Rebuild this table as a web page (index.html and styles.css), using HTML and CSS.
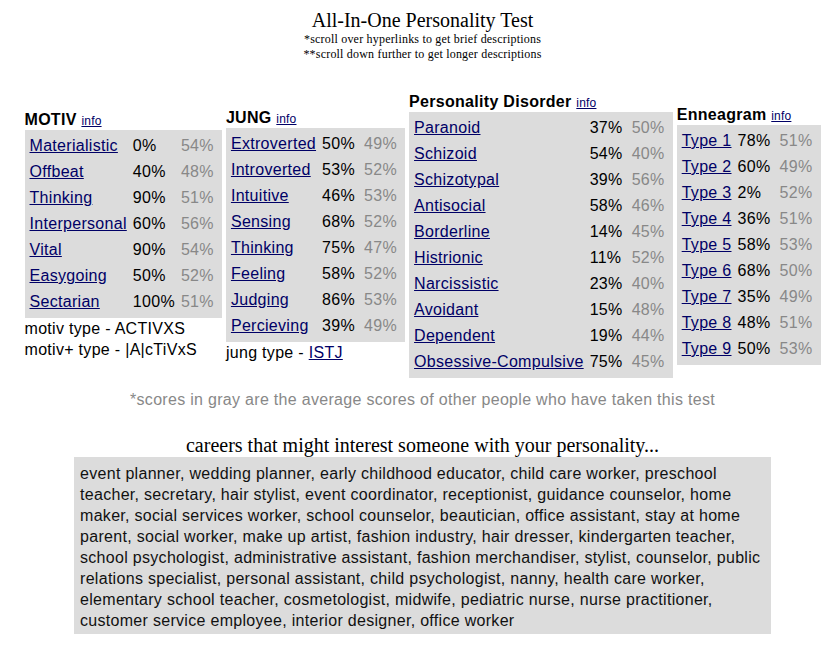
FILE: index.html
```html
<!DOCTYPE html>
<html>
<head>
<meta charset="utf-8">
<title>All-In-One Personality Test</title>
<link rel="stylesheet" href="styles.css">
</head>
<body>
<div class="page">
  <header class="intro">
    <h1 class="title">All-In-One Personality Test</h1>
    <p class="note">*scroll over hyperlinks to get brief descriptions</p>
    <p class="note">**scroll down further to get longer descriptions</p>
  </header>

  <section class="results">
    <div class="block">
      <h2 class="block-head">MOTIV <a href="#" class="info">info</a></h2>
      <table class="scores">
        <tr><td><a href="#">Materialistic</a></td><td class="pct">0%</td><td class="avg">54%</td></tr>
        <tr><td><a href="#">Offbeat</a></td><td class="pct">40%</td><td class="avg">48%</td></tr>
        <tr><td><a href="#">Thinking</a></td><td class="pct">90%</td><td class="avg">51%</td></tr>
        <tr><td><a href="#">Interpersonal</a></td><td class="pct">60%</td><td class="avg">56%</td></tr>
        <tr><td><a href="#">Vital</a></td><td class="pct">90%</td><td class="avg">54%</td></tr>
        <tr><td><a href="#">Easygoing</a></td><td class="pct">50%</td><td class="avg">52%</td></tr>
        <tr><td><a href="#">Sectarian</a></td><td class="pct">100%</td><td class="avg">51%</td></tr>
      </table>
      <p class="type-line">motiv type - ACTIVXS</p>
      <p class="type-line">motiv+ type - |A|cTiVxS</p>
    </div>

    <div class="block">
      <h2 class="block-head">JUNG <a href="#" class="info">info</a></h2>
      <table class="scores">
        <tr><td><a href="#">Extroverted</a></td><td class="pct">50%</td><td class="avg">49%</td></tr>
        <tr><td><a href="#">Introverted</a></td><td class="pct">53%</td><td class="avg">52%</td></tr>
        <tr><td><a href="#">Intuitive</a></td><td class="pct">46%</td><td class="avg">53%</td></tr>
        <tr><td><a href="#">Sensing</a></td><td class="pct">68%</td><td class="avg">52%</td></tr>
        <tr><td><a href="#">Thinking</a></td><td class="pct">75%</td><td class="avg">47%</td></tr>
        <tr><td><a href="#">Feeling</a></td><td class="pct">58%</td><td class="avg">52%</td></tr>
        <tr><td><a href="#">Judging</a></td><td class="pct">86%</td><td class="avg">53%</td></tr>
        <tr><td><a href="#">Percieving</a></td><td class="pct">39%</td><td class="avg">49%</td></tr>
      </table>
      <p class="type-line">jung type - <a href="#">ISTJ</a></p>
    </div>

    <div class="block">
      <h2 class="block-head">Personality Disorder <a href="#" class="info">info</a></h2>
      <table class="scores">
        <tr><td><a href="#">Paranoid</a></td><td class="pct">37%</td><td class="avg">50%</td></tr>
        <tr><td><a href="#">Schizoid</a></td><td class="pct">54%</td><td class="avg">40%</td></tr>
        <tr><td><a href="#">Schizotypal</a></td><td class="pct">39%</td><td class="avg">56%</td></tr>
        <tr><td><a href="#">Antisocial</a></td><td class="pct">58%</td><td class="avg">46%</td></tr>
        <tr><td><a href="#">Borderline</a></td><td class="pct">14%</td><td class="avg">45%</td></tr>
        <tr><td><a href="#">Histrionic</a></td><td class="pct">11%</td><td class="avg">52%</td></tr>
        <tr><td><a href="#">Narcissistic</a></td><td class="pct">23%</td><td class="avg">40%</td></tr>
        <tr><td><a href="#">Avoidant</a></td><td class="pct">15%</td><td class="avg">48%</td></tr>
        <tr><td><a href="#">Dependent</a></td><td class="pct">19%</td><td class="avg">44%</td></tr>
        <tr><td><a href="#">Obsessive-Compulsive</a></td><td class="pct">75%</td><td class="avg">45%</td></tr>
      </table>
    </div>

    <div class="block">
      <h2 class="block-head">Enneagram <a href="#" class="info">info</a></h2>
      <table class="scores">
        <tr><td><a href="#">Type 1</a></td><td class="pct">78%</td><td class="avg">51%</td></tr>
        <tr><td><a href="#">Type 2</a></td><td class="pct">60%</td><td class="avg">49%</td></tr>
        <tr><td><a href="#">Type 3</a></td><td class="pct">2%</td><td class="avg">52%</td></tr>
        <tr><td><a href="#">Type 4</a></td><td class="pct">36%</td><td class="avg">51%</td></tr>
        <tr><td><a href="#">Type 5</a></td><td class="pct">58%</td><td class="avg">53%</td></tr>
        <tr><td><a href="#">Type 6</a></td><td class="pct">68%</td><td class="avg">50%</td></tr>
        <tr><td><a href="#">Type 7</a></td><td class="pct">35%</td><td class="avg">49%</td></tr>
        <tr><td><a href="#">Type 8</a></td><td class="pct">48%</td><td class="avg">51%</td></tr>
        <tr><td><a href="#">Type 9</a></td><td class="pct">50%</td><td class="avg">53%</td></tr>
      </table>
    </div>
  </section>

  <p class="footnote">*scores in gray are the average scores of other people who have taken this test</p>

  <section class="careers">
    <h2 class="careers-head">careers that might interest someone with your personality...</h2>
    <p class="careers-box">event planner, wedding planner, early childhood educator, child care worker, preschool teacher, secretary, hair stylist, event coordinator, receptionist, guidance counselor, home maker, social services worker, school counselor, beautician, office assistant, stay at home parent, social worker, make up artist, fashion industry, hair dresser, kindergarten teacher, school psychologist, administrative assistant, fashion merchandiser, stylist, counselor, public relations specialist, personal assistant, child psychologist, nanny, health care worker, elementary school teacher, cosmetologist, midwife, pediatric nurse, nurse practitioner, customer service employee, interior designer, office worker</p>
  </section>
</div>
</body>
</html>
```

FILE: styles.css
```css
html, body {
  margin: 0;
  padding: 0;
  background: #ffffff;
}

body {
  font-family: "Liberation Sans", Arial, sans-serif;
  font-size: 16px;
  letter-spacing: 0.3px;
  color: #000000;
}

.page {
  padding: 8px 3px 0 8px;
}

a {
  color: #000066;
  text-decoration: underline;
}

.intro {
  text-align: center;
  font-family: "Liberation Serif", "Times New Roman", serif;
  letter-spacing: 0;
}

.title {
  margin: 0;
  font-size: 20px;
  font-weight: normal;
  line-height: 24px;
}

.note {
  margin: 0;
  font-size: 12px;
  line-height: 15px;
  letter-spacing: 0.2px;
}

.results {
  margin-top: 31px;
  display: flex;
  justify-content: center;
  align-items: center;
  gap: 4px;
}

.block-head {
  margin: 0;
  font-size: 16px;
  font-weight: bold;
  line-height: 18px;
}

.info {
  font-size: 12px;
  font-weight: normal;
  letter-spacing: 0.2px;
}

.scores {
  background: #dcdcdc;
  border-spacing: 2px;
  padding: 2px 0;
}

.scores td {
  padding: 3px 1px 3px 3px;
  line-height: 18px;
  white-space: nowrap;
}

.scores .pct {
  width: 36px;
}

.scores .avg {
  width: 36px;
  padding-right: 3px;
  color: #888888;
}

.type-line {
  margin: 0;
  line-height: 21px;
}

.footnote {
  margin: 12px 0 0;
  text-align: center;
  color: #888888;
  line-height: 20px;
}

.careers {
  margin-top: 24px;
  display: flex;
  flex-direction: column;
  align-items: center;
}

.careers-head {
  margin: 0;
  font-family: "Liberation Serif", "Times New Roman", serif;
  font-size: 20px;
  font-weight: normal;
  line-height: 23px;
  letter-spacing: 0;
}

.careers-box {
  margin: 0;
  width: 685px;
  padding: 6px 6px 3px;
  background: #dcdcdc;
  font-size: 16px;
  line-height: 21px;
  color: #111111;
}
```
